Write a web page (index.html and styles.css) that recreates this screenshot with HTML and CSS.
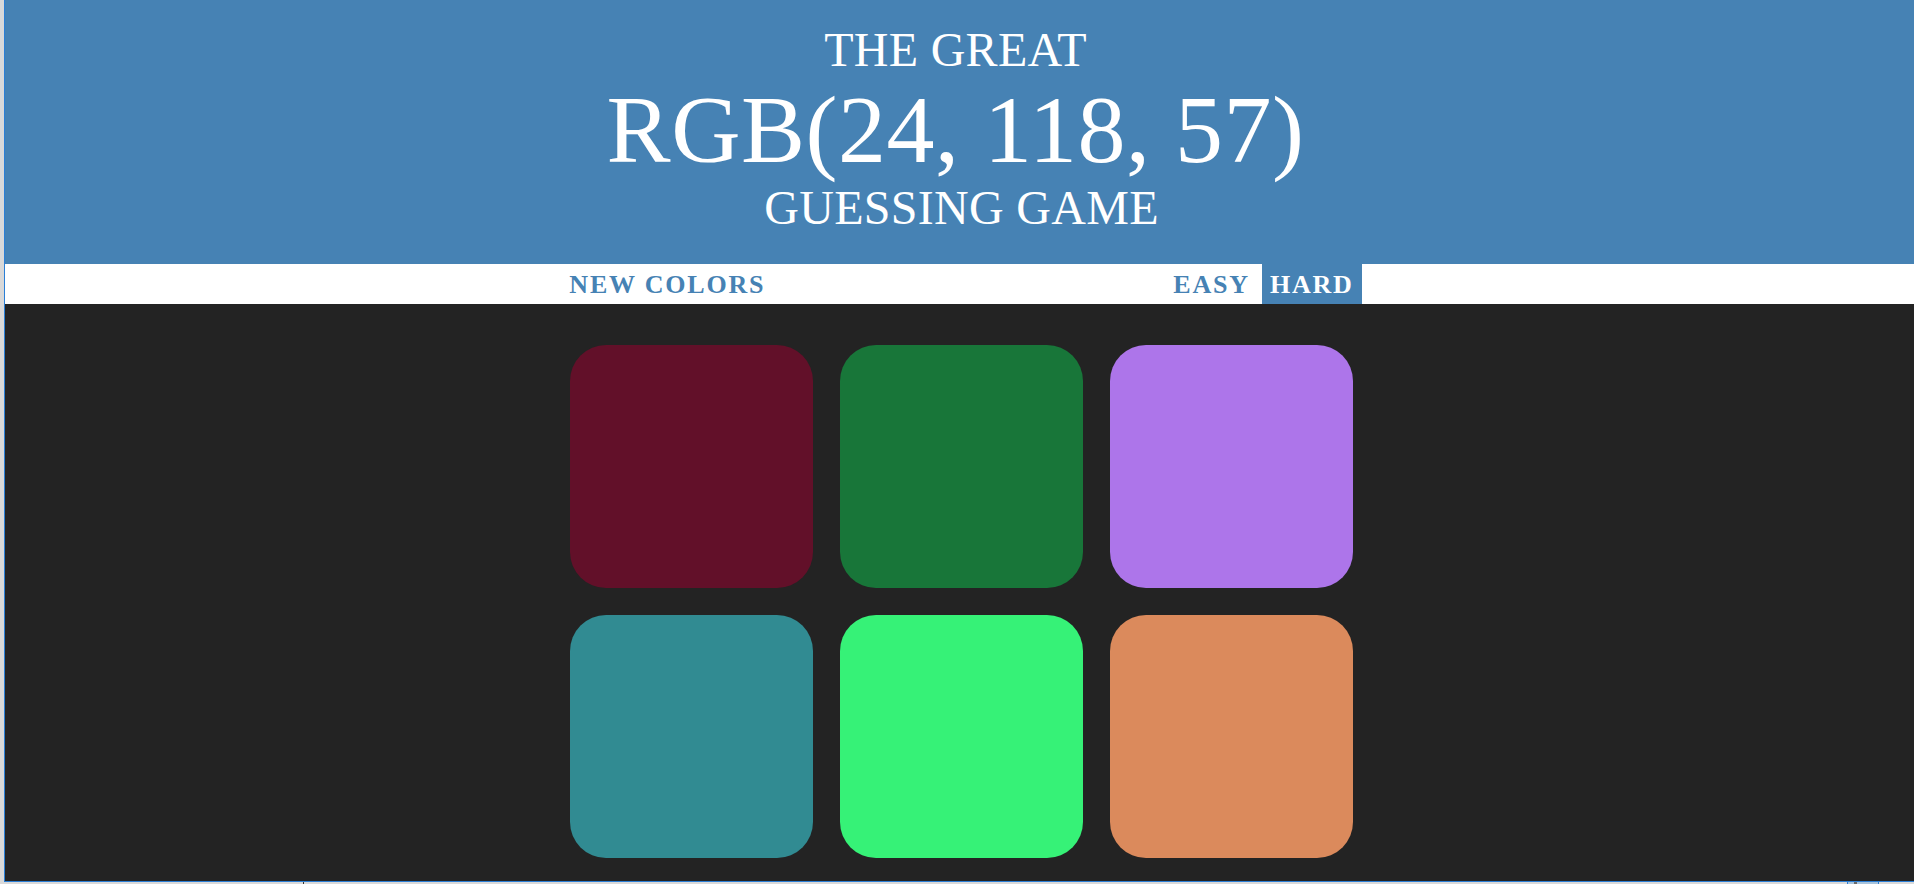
FILE: index.html
```html
<!DOCTYPE html>
<html lang="en">
<head>
<meta charset="utf-8">
<title>Color Game</title>
<link rel="stylesheet" href="styles.css">
</head>
<body>
<div class="frame">
  <h1 class="title">The Great<br><span class="color-display">RGB(24, 118, 57)</span><br><span class="subtitle">Guessing Game</span></h1>
  <div class="stripe">
    <button class="btn">New Colors</button>
    <span class="message"></span>
    <button class="btn mode">Easy</button>
    <button class="btn mode selected">Hard</button>
  </div>
  <div class="board">
    <div class="square sq1"></div>
    <div class="square sq2"></div>
    <div class="square sq3"></div>
    <div class="square sq4"></div>
    <div class="square sq5"></div>
    <div class="square sq6"></div>
  </div>
</div>
<div class="taskitem"><span class="taskicon"></span></div>
<div class="tick"></div>
</body>
</html>
```
FILE: styles.css
```css
html, body {
  margin: 0;
  padding: 0;
}
body {
  background: #d9d9d9;
  width: 1914px;
  height: 884px;
  overflow: hidden;
  position: relative;
  font-family: "Liberation Serif", "Times New Roman", serif;
}
.frame {
  margin-left: 4px;
  width: 1909px;
  height: 881px;
  border-left: 1px solid #2b7fd6;
  border-bottom: 1px solid #2b7fd6;
  background: #232323;
  display: flex;
  flex-direction: column;
}
.title {
  margin: 0;
  box-sizing: border-box;
  height: 264px;
  padding: 24px 8px 0 0;
  background: #4682b4;
  color: #ffffff;
  font-weight: normal;
  font-size: 48px;
  line-height: 1.1;
  text-align: center;
  text-transform: uppercase;
  letter-spacing: 0.3px;
}
.color-display {
  font-size: 96px;
  letter-spacing: 0.5px;
}
.subtitle {
  padding-left: 12px;
}
.stripe {
  height: 40px;
  background: #ffffff;
  display: flex;
  justify-content: center;
  padding-left: 4px;
}
.btn {
  border: none;
  background: none;
  margin: 0;
  box-sizing: border-box;
  padding: 1px 8px 0;
  height: 40px;
  line-height: 39px;
  font-family: "Liberation Serif", "Times New Roman", serif;
  font-size: 26px;
  font-weight: 700;
  letter-spacing: 1.8px;
  text-transform: uppercase;
  color: #4682b4;
}
.message {
  width: 392px;
}
.mode.selected {
  margin-left: 4px;
  background: #4682b4;
  color: #ffffff;
}
.board {
  padding: 41px 0 0 4px;
  display: grid;
  grid-template-columns: repeat(3, 243px);
  grid-auto-rows: 243px;
  gap: 27px;
  justify-content: center;
}
.square {
  border-radius: 36px;
}
.sq1 { background: #621029; }
.sq2 { background: #187639; }
.sq3 { background: #ad75ea; }
.sq4 { background: #318b92; }
.sq5 { background: #36f277; }
.sq6 { background: #db8a5c; }
.taskitem {
  position: absolute;
  left: 1847px;
  top: 882px;
  width: 30px;
  height: 2px;
  border-left: 1px solid #2b7fd6;
  border-right: 1px solid #2b7fd6;
  background: #a9c4dc;
}
.taskicon {
  position: absolute;
  left: 6px;
  top: 0;
  width: 3px;
  height: 2px;
  background: #6b6b6b;
}
.tick {
  position: absolute;
  left: 303px;
  top: 882px;
  width: 1px;
  height: 2px;
  background: #333333;
}
```
